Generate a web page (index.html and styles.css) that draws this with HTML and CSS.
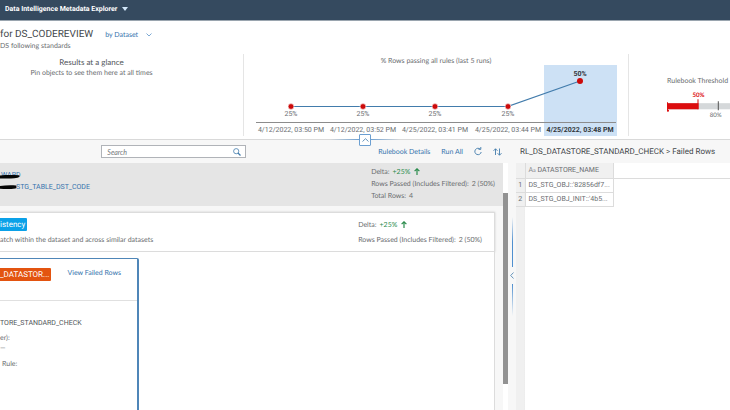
FILE: index.html
```html
<!DOCTYPE html>
<html lang="en">
<head>
  <meta charset="UTF-8">
  <meta name="viewport" content="width=device-width, initial-scale=1.0">
  <title>Data Intelligence Metadata Explorer</title>
  <link rel="stylesheet" href="styles.css">
</head>
<body>
  <header class="shell-bar">
    <button class="shell-title" type="button">Data Intelligence Metadata Explorer
      <svg width="6" height="4" viewBox="0 0 6 4"><path d="M0 0h6L3 4z" fill="#d3e8fa"/></svg>
    </button>
  </header>

  <section class="overview">
    <div class="page-title">
      <h1>for DS_CODEREVIEW</h1>
      <button class="link-button" type="button">by Dataset
        <svg class="chevron" width="6" height="4" viewBox="0 0 6 4"><path d="M.5.5 3 3 5.5.5" fill="none" stroke="#5b93c9" stroke-width=".8"/></svg>
      </button>
    </div>
    <p class="description">DS following standards</p>

    <div class="facts">
      <div class="glance">
        <h2>Results at a glance</h2>
        <p>Pin objects to see them here at all times</p>
      </div>
      <div class="trend">
        <svg viewBox="0 0 384 82" role="img" aria-label="Rows passing all rules">
          <rect x="300" y="11" width="73" height="71" fill="#cde1f5"/>
          <text x="192" y="9" class="chart-title">% Rows passing all rules (last 5 runs)</text>
          <path d="M12 68.5H372" stroke="#8c8c8c"/>
          <path d="M47 52.5H264L336 27" fill="none" stroke="#427cac" stroke-width="1.2"/>
          <g fill="#cc0a0a" stroke="#fff" stroke-width=".6">
            <circle cx="47" cy="52.5" r="2.9"/>
            <circle cx="119" cy="52.5" r="2.9"/>
            <circle cx="191" cy="52.5" r="2.9"/>
            <circle cx="264" cy="52.5" r="2.9"/>
            <circle cx="336" cy="27" r="3" stroke="none"/>
          </g>
          <g class="chart-label">
            <text x="47" y="62">25%</text>
            <text x="119" y="62">25%</text>
            <text x="191" y="62">25%</text>
            <text x="264" y="62">25%</text>
            <text x="336" y="22" class="current">50%</text>
            <text x="47" y="78">4/12/2022, 03:50 PM</text>
            <text x="119" y="78">4/12/2022, 03:52 PM</text>
            <text x="191" y="78">4/25/2022, 03:41 PM</text>
            <text x="264" y="78">4/25/2022, 03:44 PM</text>
            <text x="336" y="78" class="current">4/25/2022, 03:48 PM</text>
          </g>
        </svg>
      </div>
      <div class="threshold">
        <h3>Rulebook Threshold</h3>
        <svg viewBox="0 0 62 30" role="img" aria-label="Rulebook threshold 50% of 80%">
          <rect y="12" width="62" height="6" fill="#d5d8da"/>
          <rect y="12" width="31" height="6" fill="#dc0d0e"/>
          <path d="M.5 11v9M30.5 8v10" stroke="#dc0d0e"/>
          <circle cx="1" cy="19.5" r="1" fill="#dc0d0e"/>
          <path d="M50.5 10v9" stroke="#555"/>
          <text x="31" y="6" class="actual">50%</text>
          <text x="48" y="26" class="target">80%</text>
        </svg>
      </div>
    </div>
    <button class="collapse" type="button" aria-label="Collapse header">
      <svg width="7" height="4" viewBox="0 0 7 4"><path d="M.5 3.5l3-2.8 3 2.8" fill="none" stroke="#427cac" stroke-width=".8"/></svg>
    </button>
  </section>

  <main class="workspace">
    <section class="results">
      <div class="toolbar">
        <label class="search">
          <input type="search" placeholder="Search" aria-label="Search">
          <svg width="8" height="8" viewBox="0 0 8 8"><circle cx="3.2" cy="3.2" r="2.6" fill="none" stroke="#427cac" stroke-width=".8"/><path d="M5 5l2.5 2.5" stroke="#427cac" stroke-width="1.2"/></svg>
        </label>
        <button class="link-button" type="button">Rulebook Details</button>
        <button class="link-button" type="button">Run All</button>
        <button class="link-button" type="button" aria-label="Refresh">
          <svg width="8" height="9" viewBox="0 0 8 9"><path d="M6.3 2.2A3.2 3.2 0 1 0 7.2 5M4.5 2.3h2.3V0" fill="none" stroke="#427cac" stroke-width=".9"/></svg>
        </button>
        <button class="link-button" type="button" aria-label="Sort">
          <svg width="9" height="8" viewBox="0 0 9 8"><path d="M2.5 7V.8M.5 2.8l2-2 2 2M6.5.5v6.7M4.6 5.2l1.9 2 2-2" fill="none" stroke="#427cac" stroke-width=".9"/></svg>
        </button>
      </div>

      <div class="scroll-area">
        <div class="content">
          <div class="dataset">
            <div class="dataset-path">
              <a href="#">WARD</a>
              <a href="#">STG_TABLE_DST_CODE</a>
              <svg class="redaction" width="20" height="22" viewBox="0 0 20 22"><path d="M0 4.4C6 3.8 13 3.8 19 4.2c1 .8.5 2-1.5 2.5C12 7.8 5 7.6 0 7.6zM0 15.1c5-.9 11-1.3 16-.6.8 1 .6 2.4-.5 3-5 .7-10.5.7-15.5.2z" fill="#050505"/></svg>
            </div>
            <dl class="metrics">
              <div><dt>Delta:</dt><dd class="good">+25% <svg width="6" height="7" viewBox="0 0 6 7"><path d="M3 7V1M.6 3.2 3 .8l2.4 2.4" fill="none" stroke="#2b8c4c" stroke-width="1.2"/></svg></dd></div>
              <div><dt>Rows Passed (Includes Filtered):</dt><dd>2 (50%)</dd></div>
              <div><dt>Total Rows:</dt><dd>4</dd></div>
            </dl>
          </div>

          <div class="category">
            <div class="category-name">
              <span class="tag">istency</span>
              <p>atch within the dataset and across similar datasets</p>
            </div>
            <dl class="metrics wide">
              <div><dt>Delta:</dt><dd class="good">+25% <svg width="6" height="7" viewBox="0 0 6 7"><path d="M3 7V1M.6 3.2 3 .8l2.4 2.4" fill="none" stroke="#2b8c4c" stroke-width="1.2"/></svg></dd></div>
              <div><dt>Rows Passed (Includes Filtered):</dt><dd>2 (50%)</dd></div>
            </dl>
          </div>

          <div class="rules">
            <article class="rule">
              <div class="rule-head">
                <span class="tag failed">_DATASTOR...</span>
                <a href="#">View Failed Rows</a>
              </div>
              <div class="rule-body">
                <p class="rule-name">TORE_STANDARD_CHECK</p>
                <p>er):</p>
                <p class="empty">—</p>
                <p class="bound">Rule:</p>
              </div>
            </article>
          </div>
        </div>
        <div class="scrollbar"><div class="thumb"></div></div>
      </div>
    </section>

    <div class="splitter">
      <span class="grip"></span>
      <button type="button" aria-label="Expand panel">
        <svg width="4" height="7" viewBox="0 0 4 7"><path d="M3.5.5l-2.8 3 2.8 3" fill="none" stroke="#427cac" stroke-width=".8"/></svg>
      </button>
      <span class="grip down"></span>
    </div>

    <section class="failed-rows">
      <h2>RL_DS_DATASTORE_STANDARD_CHECK &gt; Failed Rows</h2>
      <div class="sheet">
        <table>
          <thead>
            <tr><th></th><th class="column"><span class="type">A<small>a</small></span> DATASTORE_NAME</th><th class="rest"></th></tr>
          </thead>
          <tbody>
            <tr><th>1</th><td>DS_STG_OBJ::'82856df7...</td></tr>
            <tr><th>2</th><td>DS_STG_OBJ_INIT::'4b5...</td></tr>
          </tbody>
        </table>
      </div>
    </section>
  </main>
</body>
</html>
```
FILE: styles.css
```css
* {
  box-sizing: border-box;
}
body {
  margin: 0;
  height: 100vh;
  display: flex;
  flex-direction: column;
  overflow: hidden;
  font-family: Lato, Roboto, sans-serif;
  font-size: 7px;
  line-height: 10px;
  text-rendering: geometricPrecision;
  color: #6a6d70;
  background: #fff;
}
h1, h2, h3, p, dl, dd {
  margin: 0;
  font-weight: normal;
  font-size: 7px;
}
button {
  padding: 0;
  border: none;
  background: none;
  font: inherit;
  text-rendering: inherit;
  cursor: pointer;
}
svg {
  flex: none;
}
a, .link-button {
  color: #3674ad;
  text-decoration: none;
}
h1, .shell-title, .chart-label, .tag, .dataset-path, .rule-name, .failed-rows {
  font-family: Roboto, sans-serif;
}
.shell-bar {
  flex: none;
  height: 21px;
  padding: 4px 5px;
  background: #354a5f;
  border-bottom: 1px solid #9aa5af;
}
.shell-title {
  display: flex;
  align-items: center;
  gap: 5px;
  color: #fff;
  font-weight: bold;
}
.overview {
  position: relative;
  flex: none;
  padding-top: 8px;
  border-bottom: 1px solid #d9d9d9;
}
.page-title {
  display: flex;
  align-items: center;
  gap: 12px;
}
.page-title h1 {
  font-size: 10px;
  line-height: 12px;
  color: #43474b;
}
.page-title .chevron {
  margin-left: 6px;
}
.facts {
  display: grid;
  grid-template-columns: 1fr 386px 101px;
  padding-bottom: 3px;
}
.glance {
  padding-right: 60px;
  text-align: center;
}
.glance h2 {
  margin-top: 5px;
  font-size: 8px;
  line-height: 12px;
  color: #51555a;
}
.trend {
  margin-top: 3px;
  border: solid #e5e5e5;
  border-width: 0 1px;
}
.trend svg, .threshold svg {
  display: block;
  width: 100%;
}
svg text {
  text-anchor: middle;
  font-size: 7px;
  fill: #6a6d70;
}
svg .current {
  font-weight: bold;
  fill: #32363a;
}
.threshold {
  padding: 25px 0 0 38px;
}
.threshold h3 {
  white-space: nowrap;
}
.threshold svg {
  margin-top: 5px;
}
svg .actual, svg .target {
  font-size: 6px;
}
svg .actual {
  font-weight: bold;
  fill: #dc0d0e;
}
.collapse {
  position: absolute;
  bottom: -7px;
  left: 50%;
  width: 12px;
  height: 12px;
  margin-left: -6px;
  display: flex;
  align-items: center;
  justify-content: center;
  background: #fff;
  border: 1px solid #6c9fd1;
  border-radius: 1px;
}
.collapse::before, .collapse::after {
  content: '';
  position: absolute;
  top: 4px;
  left: 100%;
  width: 30px;
  height: 1px;
  background: linear-gradient(to right, #6c9fd1, transparent);
}
.collapse::before {
  left: auto;
  right: 100%;
  background: linear-gradient(to left, #6c9fd1, transparent);
}
.workspace {
  flex: 1;
  min-height: 0;
  display: flex;
  background: #f7f7f7;
}
.results {
  flex: 0 0 508px;
  display: flex;
  flex-direction: column;
}
.toolbar {
  flex: none;
  height: 23px;
  padding: 0 6px;
  display: flex;
  align-items: center;
  justify-content: flex-end;
  gap: 11px;
}
.toolbar .link-button svg {
  display: block;
}
.search {
  width: 145px;
  height: 13px;
  margin-right: 121px;
  padding: 0 4px 0 5px;
  display: flex;
  align-items: center;
  background: #fff;
  border: 1px solid #b0b3b8;
}
.search input {
  flex: 1;
  min-width: 0;
  padding: 0;
  border: none;
  outline: none;
  background: none;
  font: inherit;
}
.search input::placeholder {
  font-style: italic;
  color: #74777a;
}
.scroll-area {
  flex: 1;
  min-height: 0;
  display: flex;
}
.content {
  flex: 1;
  min-width: 0;
  display: flex;
  flex-direction: column;
}
.dataset {
  height: 43px;
  padding: 3px 8px 0 0;
  display: flex;
  justify-content: space-between;
  background: #e5e5e5;
}
.dataset-path {
  position: relative;
  display: flex;
  flex-direction: column;
  gap: 2px;
  padding: 4px 0 0 1px;
}
.dataset-path a + a {
  padding-left: 15px;
}
.redaction {
  position: absolute;
  top: 5px;
  left: 0;
}
.metrics div {
  display: flex;
  gap: 3px;
  line-height: 12px;
}
.metrics.wide div {
  line-height: 15px;
}
.good {
  color: #2b8c4c;
}
.good svg {
  margin-left: 2px;
  vertical-align: -1px;
}
.category {
  height: 40px;
  margin: 6px 8px 0 0;
  padding: 5px 12px 0 0;
  display: flex;
  justify-content: space-between;
  background: #fff;
  border: 1px solid #dcdcdc;
  border-left: none;
  box-shadow: 0 0 2px #ccc;
}
.tag {
  display: inline-block;
  padding: 0 2px 0 0;
  font-size: 8px;
  line-height: 13px;
  color: #fff;
  background: #0ba1e8;
  border-radius: 0 1px 1px 0;
}
.tag.failed {
  background: #e35410;
}
.category-name p {
  margin-top: 4px;
}
.rules {
  flex: 1;
  min-height: 0;
  margin-right: 8px;
  padding-top: 6px;
  background: #fff;
  border-right: 1px solid #dcdcdc;
}
.rule {
  width: 139px;
  height: 100%;
  border: solid #4f86b8;
  border-width: 1px 2px 0 0;
  border-radius: 0 2px 0 0;
}
.rule-head {
  height: 42px;
  padding: 9px 16px 0 0;
  display: flex;
  align-items: flex-start;
  justify-content: space-between;
  border-bottom: 1px solid #e0e0e0;
}
.rule-body {
  padding-top: 17px;
}
.rule-name {
  margin-bottom: 5px;
  color: #51555a;
}
.bound {
  margin: 6px 0 0 2px;
}
.scrollbar {
  width: 5px;
  padding-top: 30px;
  background: #fff;
}
.thumb {
  height: 88%;
  background: #929292;
}
.splitter {
  flex: 0 0 8px;
  padding-top: 77px;
  display: flex;
  flex-direction: column;
  align-items: center;
  gap: 5px;
}
.splitter button, .splitter svg {
  display: block;
}
.grip {
  width: 1px;
  height: 50px;
  background: linear-gradient(to top, #4f8fcf 50%, transparent);
}
.grip.down {
  height: 32px;
  background: linear-gradient(to bottom, #4f8fcf, transparent);
}
.failed-rows {
  flex: 1;
  min-width: 0;
  display: flex;
  flex-direction: column;
}
.failed-rows h2 {
  flex: none;
  padding-left: 4px;
  font-size: 8px;
  line-height: 23px;
  color: #43474b;
  white-space: nowrap;
}
.sheet {
  flex: 1;
  background: linear-gradient(to right, #f0f0f0 8px, #dcdcdc 8px, #fff 9px);
}
table {
  width: 100%;
  border-collapse: collapse;
  table-layout: fixed;
}
th, td {
  width: 88px;
  height: 14px;
  padding: 0 0 0 3px;
  border: 1px solid #dcdcdc;
  border-top: none;
  font-weight: normal;
  text-align: left;
  white-space: nowrap;
}
thead th {
  height: 15px;
  background: #f0f0f0;
}
th:first-child {
  width: 9px;
  padding: 0;
  border-left: none;
  text-align: center;
}
thead .rest {
  width: auto;
  background: #fff;
  border-right: none;
}
.type {
  color: #8a8d90;
}
.type small {
  font-size: 5px;
}
```
